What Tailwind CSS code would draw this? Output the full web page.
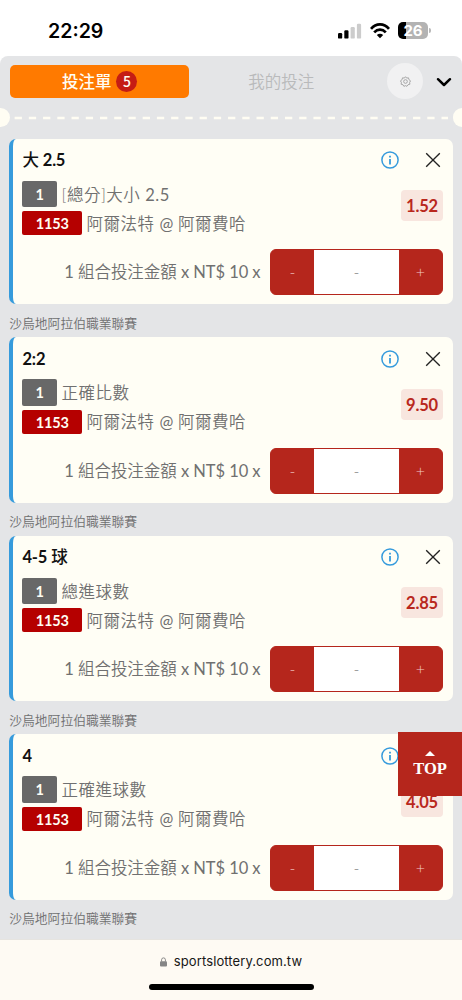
<!DOCTYPE html>
<html lang="zh-Hant">
<head>
<meta charset="utf-8">
<title>投注單</title>
<script src="https://cdn.jsdelivr.net/npm/@tailwindcss/browser@4"></script>
</head>
<body class="w-[462px] h-[1000px] overflow-hidden bg-white relative font-['Lato','Noto_Sans_CJK_TC',sans-serif]">
<div class="flex flex-col h-[1000px]">
  <header class="h-[56px] shrink-0 flex items-start justify-between pl-12 pr-[31px] font-['Inter',sans-serif] text-black">
    <div class="mt-[17px] text-[19.6px] leading-[28px] font-semibold whitespace-nowrap">22:29</div>
    <div class="flex items-center mt-[22px] h-[17px]">
      <svg class="w-[24px] h-[16px]" viewBox="0 0 24 16"><rect x="0" y="10" width="4.2" height="5.6" rx="1.2"/><rect x="6.3" y="7.3" width="4.2" height="8.3" rx="1.2"/><rect x="12.6" y="4" width="4.2" height="11.6" rx="1.2" fill="#ccc"/><rect x="18.9" y="0.7" width="4.2" height="14.9" rx="1.2" fill="#ccc"/></svg>
      <svg class="w-[20px] h-[16px] ml-[8px]" viewBox="0 0 20 16" fill="none" stroke="#000" stroke-width="2.7"><path d="M1 5.8C6-.1 14-.1 19 5.8"/><path d="M4.2 9.3c3.4-3.7 8.2-3.7 11.6 0"/><path d="M6.8 11.9 10 15.2l3.2-3.3c-1.9-1.7-4.5-1.7-6.4 0z" fill="#000" stroke="none"/></svg>
      <div class="ml-[8px] w-[30px] h-[17px] rounded-[5px] bg-linear-to-r from-black from-27% to-[#b3b3b3] to-27% text-white text-[15px] leading-[17px] font-bold text-center">26</div>
      <div class="w-[2px] h-[5px] rounded-r-full bg-[#b8b8b8] ml-px"></div>
    </div>
  </header>
  <main class="h-[883px] shrink-0 bg-[#e4e5e7] rounded-t-[8px] overflow-hidden">
    <nav class="flex items-center h-[50px] pl-[9.5px] pr-[10px]">
      <div class="w-[179.5px] h-[33px] rounded-[5px] bg-[#ff7a00] text-[#fffdf3] text-[16.5px] flex items-center justify-center gap-[5px] pl-px font-medium"><span class="mt-[2px]">投注單</span><span class="w-[21px] h-[21px] rounded-full bg-[#c51d14] text-[14px] leading-[21px] text-center font-['Noto_Sans_CJK_TC',sans-serif] font-medium">5</span></div>
      <div class="w-[185px] text-center text-[16.5px] text-[#b9babb] pt-[2px] font-[350]">我的投注</div>
      <div class="ml-[13.5px] size-[36px] rounded-full bg-[#f1f1f2] flex items-center justify-center">
        <svg class="size-[11px]" viewBox="0 0 24 24" fill="none" stroke="#a0a0a0" stroke-width="2"><path d="M12 1.5 14.5 4.5 18.5 4 19.5 8 23 10.5 21 14 21.5 18 17.5 19 15 22.5 12 21 8.5 22.5 6.5 19 2.5 18 3 14 1 10.5 4.5 8 5.5 4 9.5 4.5z" stroke-linejoin="round"/><circle cx="12" cy="12" r="4"/></svg>
      </div>
      <svg class="w-[16px] h-[10px] ml-[13px] mt-px" viewBox="0 0 16 10" fill="none" stroke="#000" stroke-width="2.5" stroke-linecap="round" stroke-linejoin="round"><path d="M2 2.2 8 8l6-5.8"/></svg>
    </nav>
    <div class="flex items-center h-[22px]">
      <div class="w-[9.5px] h-[19px] rounded-r-full bg-[#fffdf3]"></div>
      <svg class="w-[443px] h-[4px] mt-px" viewBox="0 0 443 4"><path d="M4.6 2H438" stroke="#fffdf3" stroke-width="2.6" stroke-dasharray="7.3 6.93"/></svg>
      <div class="w-[9.5px] h-[19px] rounded-l-full bg-[#fffdf3]"></div>
    </div>
    <div id="bets" class="pt-[10.5px] pl-[9.2px] pr-[9.5px]"></div>
  </main>
  <footer class="h-[61px] shrink-0 bg-[#fefaf3] border-t border-[#e6e4e0] flex flex-col items-center">
    <div class="flex items-center h-[20px] mt-[12px] font-['Inter',sans-serif] text-[13px] text-[#161616] whitespace-nowrap">
      <svg class="w-[7px] h-[10px] mr-[7px]" viewBox="0 0 8 11"><rect y="4.5" width="8" height="6.2" rx="1.2" fill="#858585"/><path d="M1.8 5V3a2.2 2.2 0 0 1 4.4 0v2" fill="none" stroke="#858585" stroke-width="1.1"/></svg>
      <span class="tracking-[0.1px]">sportslottery.com.tw</span>
    </div>
    <div class="w-[165px] h-[6px] rounded-full bg-black mt-[12px]"></div>
  </footer>
</div>
<a class="absolute right-0 top-[732px] w-[64px] h-[64px] bg-[#b5261c] text-white flex flex-col items-center pt-[19px] font-['Liberation_Serif',serif] font-bold text-[16.5px] leading-[18px]">
  <svg class="w-[10px] h-[5px] mb-[4px]" viewBox="0 0 10 5"><path d="M5 0 10 5H0z" fill="#fff"/></svg>TOP</a>
<script>
const bets = [
  ['大 <b class="font-bold">2.5</b>', '[總分]大小 <span class="font-normal">2.5</span>', '1.52'],
  ['<b class="font-bold">2:2</b>', '正確比數', '9.50'],
  ['<b class="font-bold">4-5</b> 球', '總進球數', '2.85'],
  ['<b class="font-bold">4</b>', '正確進球數', '4.05']
];
document.getElementById('bets').innerHTML = bets.map(([pick, market, odds]) => `
<article class="h-[165.5px] rounded-[7px] border-l-[4px] border-[#369bdc] bg-[#fffef5] pl-[9.3px] pr-[9.5px] pt-[8px] overflow-hidden whitespace-nowrap">
  <div class="flex items-center h-[27px]">
    <h2 class="flex-1 pt-px text-[16.5px] font-medium tracking-[-0.2px] text-[#111]">${pick}</h2>
    <svg class="size-[18px]" viewBox="0 0 18 18" fill="none" stroke="#369bdc" stroke-width="1.5"><circle cx="9" cy="9" r="8.1"/><path d="M9 8v5.4M9 4.8v1.6" stroke-width="1.8"/></svg>
    <svg class="size-[16px] ml-[26px] mr-[2px]" viewBox="0 0 16 16" fill="none" stroke="#222" stroke-width="1.35"><path d="M1.2 1.2 14.8 14.8M14.8 1.2 1.2 14.8"/></svg>
  </div>
  <div class="flex justify-between mt-[7px]">
    <div class="text-[16.5px] tracking-[0.5px] text-[#707070] font-[350]">
      <div class="flex items-center h-[27px]"><span class="w-[34.5px] h-[26.5px] rounded-[2px] bg-[#686868] text-[#fffdf3] text-[14.5px] leading-[28px] font-bold text-center mr-[4.5px] tracking-normal">1</span><span class="pt-[2px]">${market}</span></div>
      <div class="flex items-center h-[24px] mt-[3.5px]"><span class="w-[59.5px] h-[24px] rounded-[2px] bg-[#b50000] text-[#fffdf3] text-[14.5px] leading-[25px] font-bold text-center mr-[4.5px] tracking-[-0.2px]">1153</span><span class="pt-[2px]">阿爾法特 <span class="font-normal tracking-[-0.3px]">@</span> 阿爾費哈</span></div>
    </div>
    <div class="w-[42px] h-[31px] mt-[9.5px] rounded-[4px] bg-[#f8e6df] text-[#b9281d] text-[16.5px] leading-[32px] font-bold text-center tracking-[-0.2px]">${odds}</div>
  </div>
  <div class="flex items-center justify-end mt-[14px]">
    <span class="text-[16.5px] text-[#707070] mr-[9.5px] pt-px font-[350] tracking-[-0.07px]"><span class="font-normal">1</span> 組合投注金額 <span class="font-normal">x NT$ 10 x</span></span>
    <div class="flex w-[173px] h-[46px] rounded-[6px] border border-[#b5261c] bg-[#b5261c] overflow-hidden text-[16px] text-[#f1c9c5] font-light">
      <span class="w-[43px] leading-[44px] text-center">-</span><span class="w-[85px] bg-white text-[#777] leading-[44px] text-center">-</span><span class="flex-1 leading-[44px] text-center">+</span>
    </div>
  </div>
</article>
<p class="h-[33px] pt-[9.5px] text-[12.8px] leading-[18px] text-[#6f6f70] font-[350]">沙烏地阿拉伯職業聯賽</p>`).join('');
</script>
</body>
</html>
